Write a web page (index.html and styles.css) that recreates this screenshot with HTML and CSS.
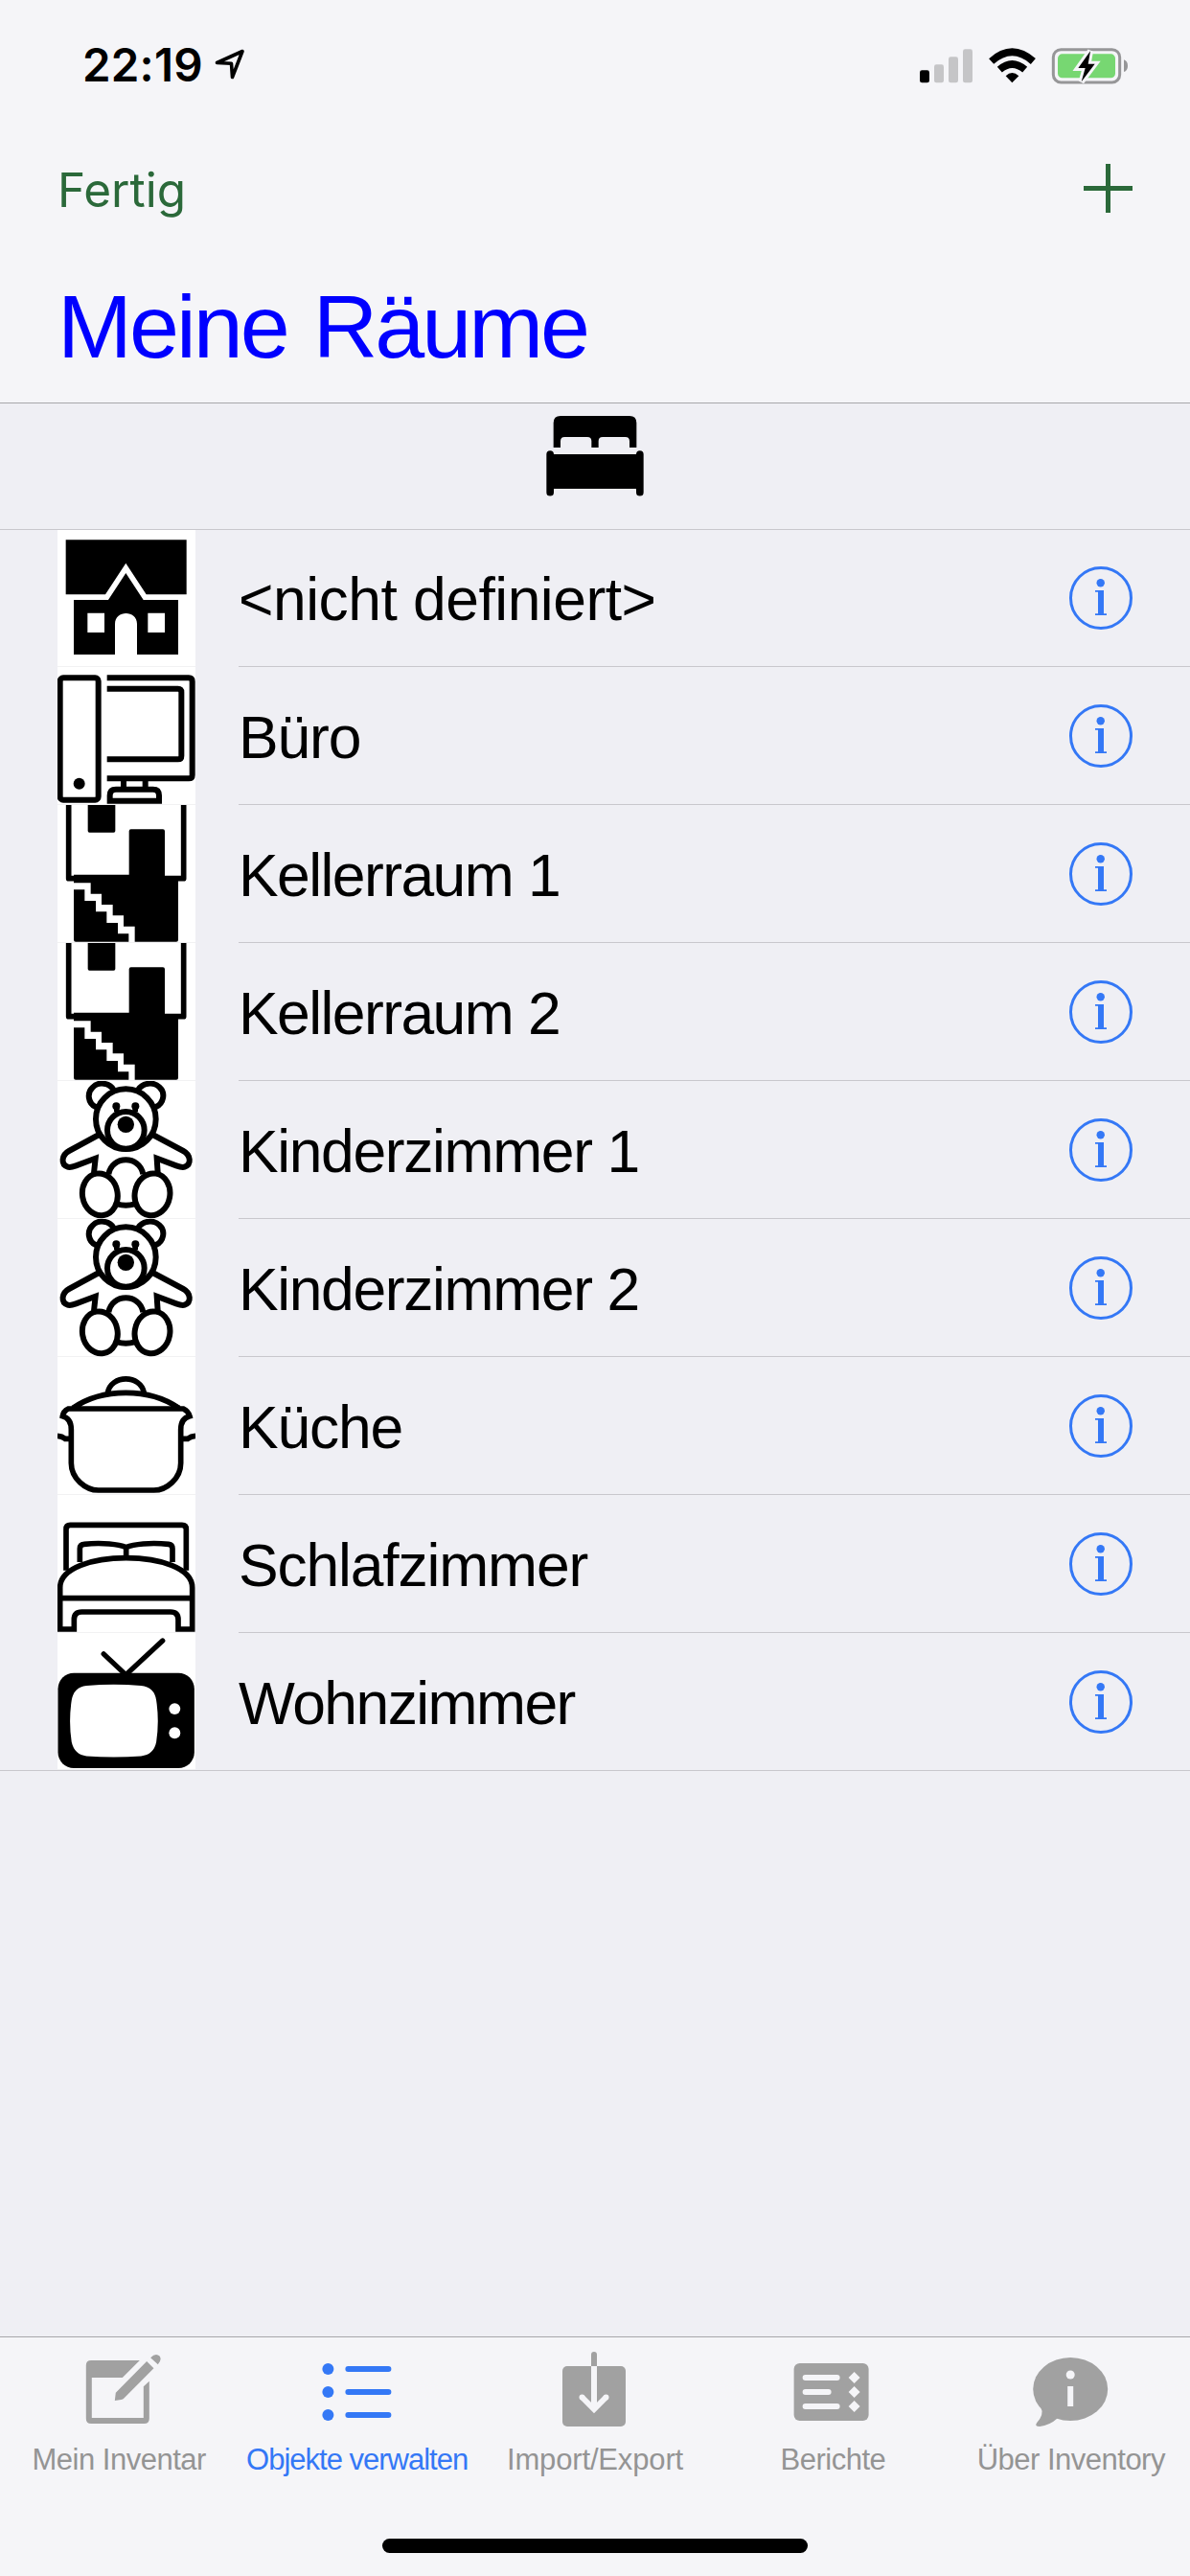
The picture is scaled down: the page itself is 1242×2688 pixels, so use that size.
FILE: index.html
```html
<!DOCTYPE html>
<html lang="de">
<head>
<meta charset="utf-8">
<title>Meine Räume</title>
<link rel="stylesheet" href="styles.css">
</head>
<body>
<svg class="defs" aria-hidden="true">
  <symbol id="info" viewBox="0 0 66 66">
    <circle cx="33" cy="33" r="31.500" fill="none" stroke="currentColor" stroke-width="3"/>
    <circle cx="32.700" cy="17.300" r="4.200" fill="currentColor"/>
    <path d="M27 25h9v24.200h3V51H27v-1.800h3V26.800h-3z" fill="currentColor"/>
  </symbol>
  <symbol id="cellar" viewBox="60 30 432 432">
    <path d="M95 20V260H455V20" fill="none" stroke="#000" stroke-width="17" stroke-linejoin="round"/>
    <rect x="155" y="20" width="86" height="96" rx="5"/>
    <path d="M284 112q0-6 6-6h100q6 0 6 6v140h42v200q0 6-6 6H302v-48h-35v-34h-34v-34h-35v-34h-34v-34h-53v-26h173z"/>
    <path d="M111 295h34v35h35v34h34v35h35v34h34v25H117q-6 0-6-6z"/>
  </symbol>
  <symbol id="teddy" viewBox="60 24 432 432">
    <g fill="none" stroke="#000" stroke-width="18">
      <path d="M181 106C154 94 152 60 170 44C188 24 224 30 236 52M367 106C394 94 398 60 380 44C360 24 326 30 312 52"/>
      <ellipse cx="274" cy="143" rx="94" ry="94"/>
      <circle cx="274" cy="178" r="58"/>
      <path d="M190 192L96 243C72 256 70 286 92 293Q100 296 118 289L179 266L174 312M358 192L454 243C478 256 480 286 458 293Q450 296 432 289L371 266L374 312"/>
      <path d="M220 316C230 256 318 256 328 316M246 409Q274 417 302 409"/>
      <ellipse cx="193" cy="379" rx="55" ry="66" transform="rotate(-10 193 379)"/>
      <ellipse cx="357" cy="379" rx="55" ry="66" transform="rotate(10 357 379)"/>
    </g>
    <circle cx="274" cy="160" r="26"/><circle cx="244" cy="103" r="12"/><circle cx="304" cy="103" r="12"/>
    <path d="M237 103h17v18h-17zM295 103h17v18h-17z"/>
  </symbol>
</svg>

<div class="screen">
  <header class="top">
    <div class="status">
      <span class="time">22:19</span>
      <svg class="location" viewBox="0 0 34 34"><path d="M3.500 14.500L30 2.500L19.500 29.500L18.500 15.300z" fill="none" stroke="#000" stroke-width="3.600" stroke-linejoin="round"/></svg>
      <svg class="indicators" viewBox="180 140 660 120">
        <rect x="180" y="216" width="30" height="39" rx="7"/>
        <g fill="#c5c5c7"><rect x="225" y="198" width="30" height="57" rx="7"/><rect x="270" y="174" width="30" height="81" rx="7"/><rect x="315" y="150" width="30" height="105" rx="7"/></g>
        <g fill="none" stroke="#000" stroke-width="23"><path d="M404 188Q469 130 535 188"/><path d="M430 214Q469 180 509 214"/></g>
        <path d="M449 234Q469 214 490 234L469 255z"/>
        <rect x="598" y="151" width="208" height="103" rx="24" fill="none" stroke="#969698" stroke-width="9"/>
        <rect x="612" y="165" width="180" height="75" rx="14" fill="#77d772"/>
        <path d="M819 183Q831 187 831 202T819 221z" fill="#969698"/>
        <path d="M714 156L676 209H698L686 252L728 196H707z" fill="#000" stroke="#f5f5f8" stroke-width="18" paint-order="stroke" stroke-linejoin="miter"/>
      </svg>
    </div>
    <div class="nav">
      <span class="done">Fertig</span>
      <svg class="plus" viewBox="0 0 51 51"><path d="M0 25.500h51M25.500 0v51" stroke="#2b693a" stroke-width="5"/></svg>
    </div>
    <h1 class="title">Meine Räume</h1>
  </header>

  <main class="content">
    <div class="section">
      <svg class="bed" viewBox="210 99 306 255">
        <path d="M233 201V124Q233 102 255 102H471Q493 102 493 124V201H471V181Q471 168 458 168H387Q374 168 374 181V201H352V181Q352 168 339 168H268Q255 168 255 181V201z"/>
        <path d="M211 222a11.500 11.500 0 0 1 23 0H492a11.500 11.500 0 0 1 23 0V341a11.500 11.500 0 0 1-23 0V330H234V341a11.500 11.500 0 0 1-23 0z"/>
      </svg>
    </div>
    <ul class="rooms">
      <li class="room first">
        <svg class="thumb" viewBox="60 39 432 429">
          <path d="M86 70H464V241H338L274 143L210 241H86z"/>
          <path d="M111 258H219L274 174L329 258H438V429H309V333C309 289 240 289 240 333V429H111zM154 299V360H207V299zM343 299V360H396V299z" fill-rule="evenodd"/>
        </svg>
        <div class="cell loose"><span>&lt;nicht definiert&gt;</span><svg class="info"><use href="#info"/></svg></div>
      </li>
      <li class="room">
        <svg class="thumb" viewBox="60 468 432 432">
          <g fill="none" stroke="#000" stroke-width="18">
            <rect x="68" y="502" width="120" height="382" rx="10"/>
            <path d="M215 502H471Q482 502 482 513V806Q482 817 471 817H215M215 536H437Q448 536 448 547V746Q448 757 437 757H215M267 818V850M335 818V850"/>
            <path d="M224 887V870Q224 851 243 851H359Q378 851 378 870V887z"/>
          </g>
          <circle cx="128" cy="833" r="18"/>
        </svg>
        <div class="cell"><span>Büro</span><svg class="info"><use href="#info"/></svg></div>
      </li>
      <li class="room"><svg class="thumb"><use href="#cellar"/></svg><div class="cell tight"><span>Kellerraum 1</span><svg class="info"><use href="#info"/></svg></div></li>
      <li class="room"><svg class="thumb"><use href="#cellar"/></svg><div class="cell tight"><span>Kellerraum 2</span><svg class="info"><use href="#info"/></svg></div></li>
      <li class="room"><svg class="thumb"><use href="#teddy"/></svg><div class="cell snug"><span>Kinderzimmer 1</span><svg class="info"><use href="#info"/></svg></div></li>
      <li class="room"><svg class="thumb"><use href="#teddy"/></svg><div class="cell snug"><span>Kinderzimmer 2</span><svg class="info"><use href="#info"/></svg></div></li>
      <li class="room">
        <svg class="thumb" viewBox="60 18 432 432">
          <g fill="none" stroke="#000" stroke-width="17">
            <path d="M217 130C228 72 320 72 331 130M108 178C200 114 348 114 440 178" />
            <path d="M94 180H454Q470 188 474 203Q446 210 446 245V350C446 398 402 435 362 435H188C148 435 103 398 103 350V245Q103 210 76 203Q78 188 94 180z"/>
            <path d="M60 265Q74 266 84 274L102 274M492 265Q478 266 468 274L446 274"/>
          </g>
          <path d="M104 172L150 150L134 174zM446 172L400 150L416 174z"/>
        </svg>
        <div class="cell"><span>Küche</span><svg class="info"><use href="#info"/></svg></div>
      </li>
      <li class="room">
        <svg class="thumb" viewBox="60 450 432 432">
          <g fill="none" stroke="#000" stroke-width="17">
            <path d="M87 686V557Q87 544 100 544H450Q463 544 463 557V686"/>
            <path d="M130 660V618Q130 605 143 604C200 598 252 604 275 614C298 604 350 598 408 604Q420 605 420 618V660M275 614V644"/>
            <path d="M68 870V740C68 616 482 616 482 740V870H438V840Q438 816 414 816H136Q112 816 112 840V870zM68 773H482"/>
          </g>
        </svg>
        <div class="cell"><span>Schlafzimmer</span><svg class="info"><use href="#info"/></svg></div>
      </li>
      <li class="room last">
        <svg class="thumb" viewBox="60 42 432 432">
          <path d="M204 108L274 174L390 66" fill="none" stroke="#000" stroke-width="16" stroke-linecap="round"/>
          <rect x="60" y="168" width="430" height="300" rx="50"/>
          <path d="M150 208Q236 200 322 208Q364 212 370 254Q380 320 370 386Q362 426 322 430Q236 437 150 430Q112 426 103 386Q93 320 103 254Q110 212 150 208z" fill="#fff"/>
          <circle cx="428" cy="281" r="18" fill="#fff"/><circle cx="428" cy="357" r="18" fill="#fff"/>
        </svg>
        <div class="cell tight"><span>Wohnzimmer</span><svg class="info"><use href="#info"/></svg></div>
      </li>
    </ul>
  </main>

  <footer class="bottom">
    <nav class="tabs">
      <div class="tab">
        <svg viewBox="237.600 93 270 270" fill="#a1a1a1">
          <path d="M286 129H438L384 183H288V309H450V211L468 194V311Q468 327 452 327H286Q270 327 270 311V145Q270 129 286 129z"/>
          <path d="M460 132L482 154L388 248Q386 251 380 252L360 255L363 230zM472 121Q488 104 501 116Q508 128 495 142z"/>
        </svg>
        <span>Mein Inventar</span>
      </div>
      <div class="tab active">
        <svg viewBox="982.800 93 270 270" fill="#3478f6">
          <circle cx="1026" cy="156" r="18"/><circle cx="1026" cy="228" r="18"/><circle cx="1026" cy="300" r="18"/>
          <rect x="1080" y="147" width="144" height="18" rx="9"/><rect x="1080" y="219" width="144" height="18" rx="9"/><rect x="1080" y="291" width="144" height="18" rx="9"/>
        </svg>
        <span>Objekte verwalten</span>
      </div>
      <div class="tab wide">
        <svg viewBox="576 2451 90 90" fill="#a1a1a1">
          <rect x="587" y="2469" width="66" height="63" rx="5"/>
          <path d="M617 2469V2457a3 3 0 0 1 6 0V2469z"/>
          <path d="M620 2469V2512M607.500 2501.500L620 2514L632.500 2501.500" fill="none" stroke="#f5f5f8" stroke-width="6"/><circle cx="607.500" cy="2501.500" r="3" fill="#f5f5f8"/><circle cx="632.500" cy="2501.500" r="3" fill="#f5f5f8"/>
        </svg>
        <span>Import/Export</span>
      </div>
      <div class="tab">
        <svg viewBox="824.400 2451 90 90" fill="#a1a1a1">
          <rect x="829" y="2466" width="78" height="60" rx="6"/>
          <g fill="#f5f5f8"><rect x="838" y="2478" width="39" height="6" rx="3"/><rect x="838" y="2493" width="30" height="6" rx="3"/><rect x="838" y="2508" width="39" height="6" rx="3"/>
          <path d="M892 2475l6 6-6 6-6-6zM892 2490l6 6-6 6-6-6zM892 2505l6 6-6 6-6-6z"/></g>
        </svg>
        <span>Berichte</span>
      </div>
      <div class="tab">
        <svg viewBox="1072.800 2451 90 90" fill="#a1a1a1">
          <ellipse cx="1117" cy="2493" rx="39" ry="33"/>
          <path d="M1086 2512Q1090 2519 1082 2528Q1079 2532 1085 2532Q1095 2531 1104 2523z"/>
          <circle cx="1117" cy="2478" r="4.500" fill="#f5f5f8"/><rect x="1114" y="2490" width="6" height="21" fill="#f5f5f8"/>
        </svg>
        <span>Über Inventory</span>
      </div>
    </nav>
    <div class="home"></div>
  </footer>
</div>
</body>
</html>
```
FILE: styles.css
```css
* { box-sizing: border-box; }
body { margin: 0; background: #efeff4; }
svg { display: block; flex: none; }
.defs { position: absolute; width: 0; height: 0; }

.screen {
  display: flex;
  flex-direction: column;
  width: 1242px;
  height: 2688px;
  overflow: hidden;
  background: #efeff4;
  color: #000;
  font-family: "Liberation Sans", Arial, sans-serif;
}

.top {
  height: 421px;
  background: #f5f5f8;
  border-bottom: 1px solid #a7a7aa;
}
.status {
  display: flex;
  align-items: center;
  height: 136px;
  padding: 0 62px 0 86px;
}
.time {
  width: 137px;
  font: 600 47.5px/60px Inter, sans-serif;
  letter-spacing: 0.2px;
  white-space: nowrap;
}
.location { width: 34px; height: 34px; }
.indicators { width: 220px; height: 40px; margin-left: auto; }
.nav {
  display: flex;
  align-items: center;
  justify-content: space-between;
  height: 121px;
  padding: 0 60px;
}
.done {
  padding-top: 3px;
  font: 400 49.5px/60px Inter, sans-serif;
  color: #2b693a;
}
.plus { width: 51px; height: 51px; }
.title {
  margin: 0;
  padding: 1px 60px 0;
  font-size: 93.500px;
  font-weight: 400;
  line-height: 165px;
  letter-spacing: -3px;
  word-spacing: 4px;
  color: #00f;
}

.content { flex: 1; }
.section {
  display: flex;
  justify-content: center;
  height: 132px;
  padding-top: 12px;
  border-bottom: 1px solid #c8c7cc;
}
.bed { width: 102px; height: 85px; }
.rooms { margin: 0; padding: 0; list-style: none; }
.room {
  display: flex;
  height: 144px;
  padding-left: 60px;
}
.first { height: 143px; }
.thumb {
  width: 144px;
  height: 100%;
  margin-right: 45px;
  background: linear-gradient(#fff, #fff) top / 100% calc(100% - 1px) no-repeat #f1f1f3;
}
.cell {
  flex: 1;
  display: flex;
  align-items: center;
  justify-content: space-between;
  padding-right: 60px;
  border-bottom: 1px solid #c8c7cc;
  font-size: 62.400px;
  letter-spacing: -1.150px;
  white-space: nowrap;
}
.cell span { padding-top: 3px; }
.loose { letter-spacing: -0.500px; }
.snug { letter-spacing: -1.350px; }
.tight { letter-spacing: -1.550px; }
.last { border-bottom: 1px solid #c8c7cc; }
.last .cell { border-bottom: 0; }
.info { width: 66px; height: 66px; color: #3478f6; }

.bottom {
  height: 250px;
  background: #f5f5f8;
  border-top: 1px solid #a7a7aa;
}
.tabs {
  display: grid;
  grid-template-columns: repeat(5, 1fr);
  height: 210px;
  padding-top: 12px;
}
.tab {
  display: flex;
  flex-direction: column;
  align-items: center;
  gap: 6px;
  font-size: 31px;
  line-height: 40px;
  letter-spacing: -0.500px;
  white-space: nowrap;
  color: #949494;
}
.tab svg { width: 90px; height: 90px; }
.active { color: #3478f6; letter-spacing: -1px; }
.wide { letter-spacing: -0.150px; }
.home {
  width: 444px;
  height: 15px;
  margin: 0 auto;
  border-radius: 8px;
  background: #000;
}
```
